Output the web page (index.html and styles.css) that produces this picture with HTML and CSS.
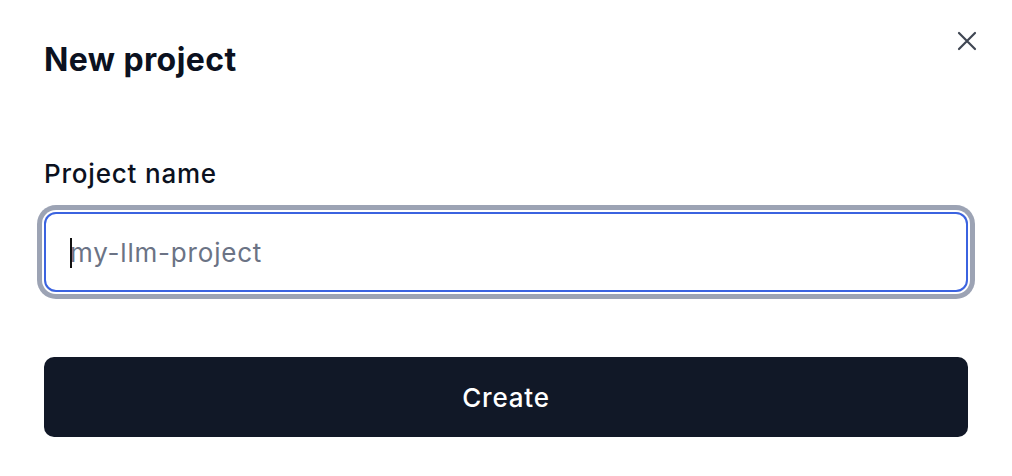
FILE: index.html
```html
<!DOCTYPE html>
<html lang="en">
<head>
<meta charset="utf-8">
<title>New project</title>
<link rel="stylesheet" href="styles.css">
</head>
<body>
<div class="dialog">
  <button class="close" type="button" aria-label="Close">
    <svg width="20" height="20" viewBox="0 0 20 20" fill="none" stroke="currentColor" stroke-width="2.2" stroke-linecap="round">
      <path d="M2 2L18 18M18 2L2 18"/>
    </svg>
  </button>
  <h2 class="title">New project</h2>
  <form class="form">
    <label class="label" for="pname">Project name</label>
    <div class="field is-focused">
      <span class="caret"></span>
      <input id="pname" class="input" type="text" placeholder="my-llm-project">
    </div>
    <button class="submit" type="button">Create</button>
  </form>
</div>
</body>
</html>
```

FILE: styles.css
```css
* { box-sizing: border-box; }
html, body {
  margin: 0;
  padding: 0;
  background: #ffffff;
  font-family: Inter, "Noto Sans", "Liberation Sans", sans-serif;
  color: #0b1120;
}
.dialog {
  position: relative;
  padding: 41px 44px 40px;
}
.close {
  position: absolute;
  top: 31px;
  right: 35px;
  width: 20px;
  height: 20px;
  padding: 0;
  border: 0;
  background: none;
  color: #3f4653;
  display: flex;
}
.title {
  margin: 0;
  font-size: 32px;
  line-height: 38px;
  font-weight: 700;
  letter-spacing: 0.4px;
  color: #0b1120;
}
.form {
  display: flex;
  flex-direction: column;
  margin-top: 79px;
}
.label {
  font-size: 26px;
  line-height: 32px;
  font-weight: 500;
  letter-spacing: 0.8px;
  color: #0b1120;
}
.field {
  position: relative;
  margin-top: 22px;
  border-radius: 12px;
}
.field.is-focused {
  box-shadow: 0 0 0 2px #ffffff, 0 0 0 7px #9ca3b4;
}
.input {
  display: block;
  width: 100%;
  height: 80px;
  border: 2px solid #3b63e0;
  border-radius: 12px;
  padding: 0 24px;
  font-family: inherit;
  font-size: 26px;
  letter-spacing: 0.8px;
  color: #0b1120;
  outline: none;
  background: #fff;
}
.input::placeholder {
  color: #6b7385;
}
.caret {
  position: absolute;
  left: 26px;
  top: 26px;
  width: 2px;
  height: 30px;
  background: #111;
  z-index: 1;
}
.submit {
  margin-top: 65px;
  height: 80px;
  border: 0;
  border-radius: 10px;
  background: #111827;
  color: #ffffff;
  font-family: inherit;
  font-size: 26px;
  font-weight: 500;
  letter-spacing: 0.8px;
}
```
